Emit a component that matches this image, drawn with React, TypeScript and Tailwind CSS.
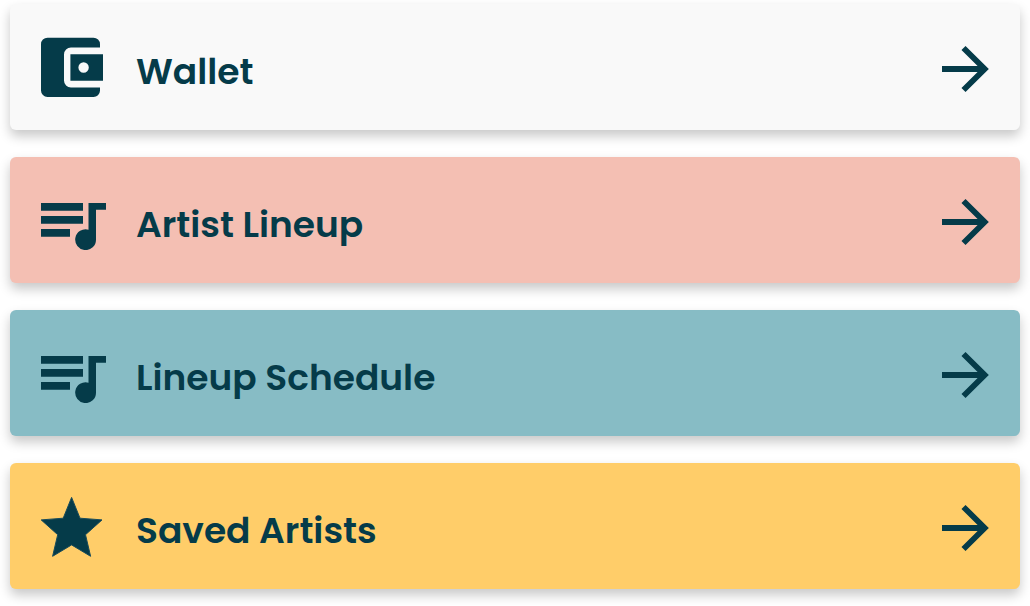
import type { ReactNode } from "react";

function WalletIcon() {
  return (
    <svg viewBox="0 0 66 60" className="h-15 w-16.5 shrink-0" fill="currentColor" aria-hidden="true">
      <path d="M7.500 .7H53.500a6.500 6.500 0 0 1 6.500 6.500v3.300H31a7 7 0 0 0-7 7V43.500a7 7 0 0 0 7 7H60v3.300a6.500 6.500 0 0 1-6.500 6.200H7.500a6.500 6.500 0 0 1-6.500-6.500V7.200A6.500 6.500 0 0 1 7.500 .7z" />
      <path fillRule="evenodd" d="M30.400 17.300H63V43.700H30.400zM43.600 25.300a5.200 5.200 0 1 0 0 10.400a5.200 5.200 0 1 0 0-10.400z" />
    </svg>
  );
}

function QueueIcon() {
  return (
    <svg viewBox="0 0 66 60" className="h-15 w-16.5 shrink-0" fill="currentColor" aria-hidden="true">
      <path d="M1 13H43V20.700H1zM1 26H43V33.700H1zM1 39H30V46.700H1z" />
      <path d="M48.500 13H66V19.700H56V49.500a10.400 10.400 0 1 1-7.500-9.800z" />
    </svg>
  );
}

function StarIcon() {
  return (
    <svg viewBox="0 0 66 60" className="h-15 w-16.5 shrink-0 overflow-visible" fill="currentColor" aria-hidden="true">
      <path
        d="M31.600 1.400L40 22.200L62 23.900L45.500 38.700L50.600 60.300L31.600 48.900L12.600 60.300L17.700 38.700L1.200 23.900L23.200 22.200z"
        stroke="#184b5a"
        strokeWidth="1"
      />
    </svg>
  );
}

function ArrowIcon() {
  return (
    <svg viewBox="0 0 50 52" className="h-13 w-12.5 shrink-0" fill="none" stroke="currentColor" strokeWidth="5.8" aria-hidden="true">
      <path d="M2 28H45M23.500 7L44.700 28L23.500 49" />
    </svg>
  );
}

type MenuItem = {
  label: string;
  href: string;
  icon: ReactNode;
  color: string;
};

const items: MenuItem[] = [
  { label: "Wallet", href: "#wallet", icon: <WalletIcon />, color: "bg-[#f9f9f9]" },
  { label: "Artist Lineup", href: "#lineup", icon: <QueueIcon />, color: "bg-[#f4bfb3]" },
  { label: "Lineup Schedule", href: "#schedule", icon: <QueueIcon />, color: "bg-[#87bcc5]" },
  { label: "Saved Artists", href: "#saved", icon: <StarIcon />, color: "bg-[#ffcd69]" },
];

export default function App() {
  return (
    <nav className="flex flex-col gap-[27px] bg-white px-2.5 pt-1 pb-4 font-['Poppins','Inter',sans-serif] text-[#053b49]">
      {items.map((item) => (
        <a
          key={item.label}
          href={item.href}
          className={`flex items-center rounded-md px-7.5 py-8 shadow-[0_6px_12px_rgba(0,0,0,0.22)] ${item.color}`}
        >
          {item.icon}
          <span className="ml-7.5 flex-1 pt-2.5 text-4xl leading-[52px] font-semibold">
            {item.label}
          </span>
          <ArrowIcon />
        </a>
      ))}
    </nav>
  );
}
